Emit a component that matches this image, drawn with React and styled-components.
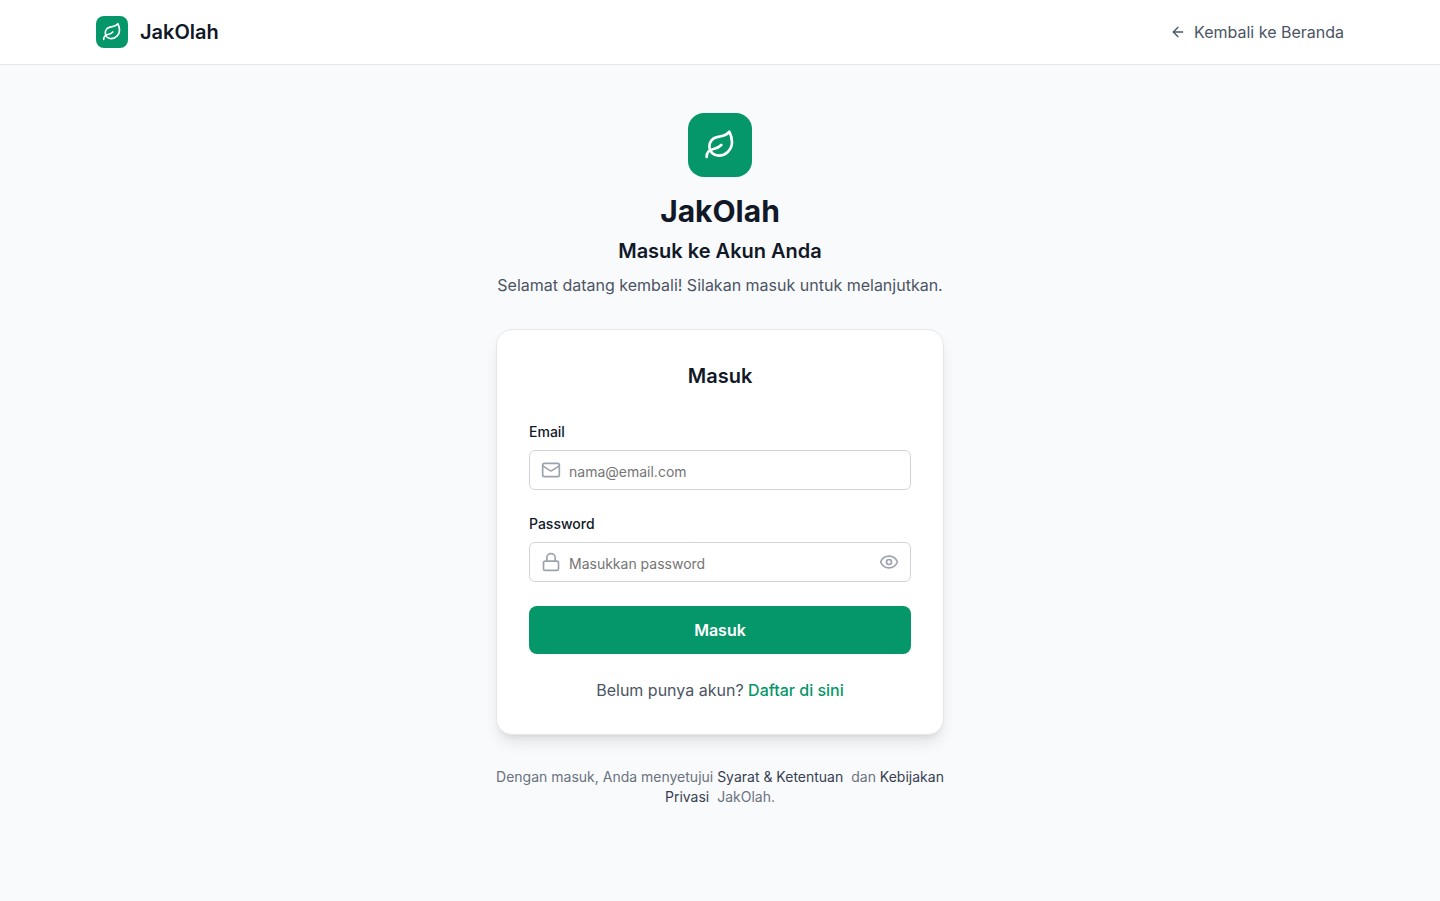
import React, { useState } from "react";
import styled, { createGlobalStyle } from "styled-components";
import { ArrowLeft, Eye, EyeOff, Leaf, Lock, Mail } from "lucide-react";

const GlobalStyle = createGlobalStyle`
  *, *::before, *::after { box-sizing: border-box; }
  body {
    margin: 0;
    background: #f9fafc;
    color: #111827;
    font-family: Inter, "Liberation Sans", sans-serif;
    font-size: 16px;
    line-height: 24px;
    -webkit-font-smoothing: antialiased;
  }
  h1, h2, h3, p { margin: 0; }
  a { color: inherit; text-decoration: none; }
  svg { display: block; flex-shrink: 0; }
`;

const Page = styled.div`
  min-height: 100vh;
  display: flex;
  flex-direction: column;
`;

const Header = styled.header`
  background: #fff;
  border-bottom: 1px solid #e5e7eb;
`;

const HeaderInner = styled.div`
  max-width: 1280px;
  height: 64px;
  margin: 0 auto;
  padding: 0 16px;
  display: flex;
  align-items: center;
  justify-content: space-between;
`;

const Brand = styled.a`
  display: flex;
  align-items: center;
  gap: 12px;
  font-size: 20px;
  font-weight: 600;
  line-height: 28px;
`;

const LogoTile = styled.span`
  display: flex;
  align-items: center;
  justify-content: center;
  width: ${(p) => (p.$large ? 64 : 32)}px;
  height: ${(p) => (p.$large ? 64 : 32)}px;
  border-radius: ${(p) => (p.$large ? 16 : 8)}px;
  background: #059669;
  color: #fff;
`;

const BackLink = styled.a`
  display: flex;
  align-items: center;
  gap: 8px;
  color: #4b5563;
`;

const Main = styled.main`
  width: 100%;
  max-width: 480px;
  margin: 0 auto;
  padding: 48px 16px;
  display: flex;
  flex-direction: column;
  gap: 32px;
`;

const Intro = styled.section`
  display: flex;
  flex-direction: column;
  align-items: center;
  gap: 8px;
  text-align: center;
`;

const Title = styled.h1`
  margin-top: 8px;
  font-size: 30px;
  font-weight: 700;
  line-height: 36px;
`;

const Subtitle = styled.h2`
  font-size: 20px;
  font-weight: 600;
  line-height: 28px;
`;

const Lead = styled.p`
  color: #4b5563;
`;

const Card = styled.section`
  padding: 32px;
  background: #fff;
  border: 1px solid #e5e7eb;
  border-radius: 16px;
  box-shadow: 0 10px 15px -3px rgba(0, 0, 0, 0.1), 0 4px 6px -4px rgba(0, 0, 0, 0.1);
`;

const CardTitle = styled(Subtitle)`
  text-align: center;
`;

const Form = styled.form`
  display: flex;
  flex-direction: column;
  gap: 24px;
  margin: 32px 0 24px;
`;

const Field = styled.div`
  display: flex;
  flex-direction: column;
  gap: 8px;
`;

const Label = styled.label`
  font-size: 14px;
  font-weight: 500;
  line-height: 20px;
`;

const InputBox = styled.div`
  display: flex;
  align-items: center;
  gap: 8px;
  height: 40px;
  padding: 0 11px;
  border: 1px solid #d1d5db;
  border-radius: 6px;
  background: #fff;
  color: #9ca3af;
  &:focus-within { border-color: #059669; }
`;

const Input = styled.input`
  flex: 1;
  min-width: 0;
  height: 100%;
  padding: 2px 0 0;
  border: 0;
  outline: 0;
  background: transparent;
  color: #111827;
  font: inherit;
  font-size: 14px;
  line-height: 20px;
  &::placeholder { color: #757575; }
`;

const IconButton = styled.button`
  padding: 0;
  border: 0;
  background: none;
  color: inherit;
  cursor: pointer;
`;

const SubmitButton = styled.button`
  height: 48px;
  padding: 0 16px;
  border: 0;
  border-radius: 8px;
  background: #059669;
  color: #fff;
  font: inherit;
  font-weight: 600;
  cursor: pointer;
  &:hover { background: #047857; }
`;

const Register = styled.p`
  color: #4b5563;
  text-align: center;
`;

const RegisterLink = styled.a`
  color: #059669;
  font-weight: 500;
`;

const Terms = styled.p`
  color: #6b7280;
  font-size: 14px;
  line-height: 20px;
  text-align: center;
`;

const TermsLink = styled.a`
  margin-right: 4px;
  color: #374151;
`;

export default function App() {
  const [visible, setVisible] = useState(false);
  return (
    <Page>
      <GlobalStyle />
      <Header>
        <HeaderInner>
          <Brand href="#">
            <LogoTile><Leaf size={20} /></LogoTile>
            JakOlah
          </Brand>
          <BackLink href="#"><ArrowLeft size={16} />Kembali ke Beranda</BackLink>
        </HeaderInner>
      </Header>
      <Main>
        <Intro>
          <LogoTile $large><Leaf size={32} /></LogoTile>
          <Title>JakOlah</Title>
          <Subtitle>Masuk ke Akun Anda</Subtitle>
          <Lead>Selamat datang kembali! Silakan masuk untuk melanjutkan.</Lead>
        </Intro>
        <Card>
          <CardTitle as="h3">Masuk</CardTitle>
          <Form onSubmit={(e) => e.preventDefault()}>
            <Field>
              <Label htmlFor="email">Email</Label>
              <InputBox>
                <Mail size={20} />
                <Input id="email" type="email" placeholder="nama@email.com" />
              </InputBox>
            </Field>
            <Field>
              <Label htmlFor="password">Password</Label>
              <InputBox>
                <Lock size={20} />
                <Input id="password" type={visible ? "text" : "password"} placeholder="Masukkan password" />
                <IconButton type="button" aria-label="Tampilkan password" onClick={() => setVisible(!visible)}>
                  {visible ? <EyeOff size={20} /> : <Eye size={20} />}
                </IconButton>
              </InputBox>
            </Field>
            <SubmitButton type="submit">Masuk</SubmitButton>
          </Form>
          <Register>
            Belum punya akun? <RegisterLink href="#">Daftar di sini</RegisterLink>
          </Register>
        </Card>
        <Terms>
          Dengan masuk, Anda menyetujui <TermsLink href="#">Syarat &amp; Ketentuan</TermsLink>{" "}
          dan <TermsLink href="#">Kebijakan Privasi</TermsLink> JakOlah.
        </Terms>
      </Main>
    </Page>
  );
}
